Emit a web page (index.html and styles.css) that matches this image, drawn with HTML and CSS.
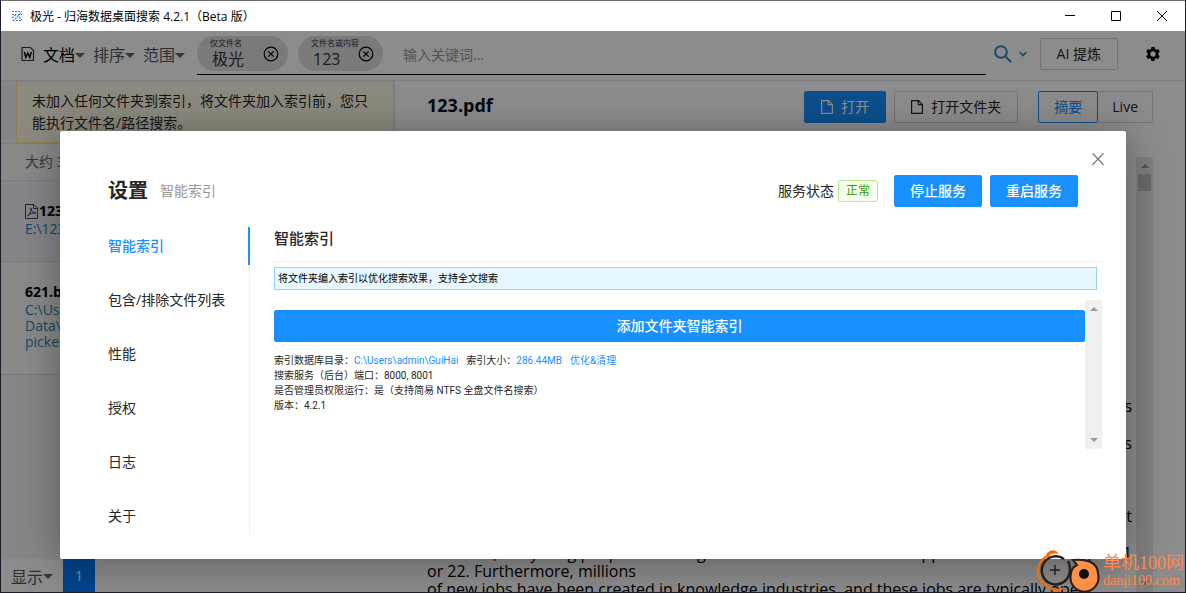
FILE: index.html
```html
<!DOCTYPE html>
<html lang="zh-CN">
<head>
<meta charset="utf-8">
<title>极光 - 归海数据桌面搜索</title>
<link rel="stylesheet" href="styles.css">
</head>
<body>
<div class="window">
  <header class="titlebar">
    <svg class="app-icon" width="12" height="12" viewBox="0 0 12 12" fill="none" stroke="#2f7be0" stroke-width="1.2" stroke-dasharray="2 1"><path d="M1 1.500h10M1 4.500h4M7 4.500h4M1 8l5-4M5 10.500h6M2 11l8-8M8 7l3 3"/></svg>
    <h1 class="window-title">极光 - 归海数据桌面搜索 4.2.1（Beta 版）</h1>
    <div class="window-controls">
      <button class="window-button" aria-label="最小化"><svg width="10" height="10" viewBox="0 0 10 10" stroke="#000"><path d="M0 4.500h10"/></svg></button>
      <button class="window-button" aria-label="最大化"><svg width="10" height="10" viewBox="0 0 10 10" fill="none" stroke="#000"><path d="M.5.5h9v9h-9z"/></svg></button>
      <button class="window-button" aria-label="关闭"><svg width="10" height="10" viewBox="0 0 10 10" stroke="#000"><path d="M0 0l10 10M10 0L0 10"/></svg></button>
    </div>
  </header>

  <div class="app">
    <div class="toolbar">
      <nav class="filters">
        <button class="filter filter-active">
          <svg width="14" height="16" viewBox="0 0 14 16" fill="none" stroke="#333" stroke-width="1.2"><path d="M1 1.500h8.500L12.500 4.500v10H1z"/><path d="M3.300 6l1.500 5.500L6.800 7l2 4.500L10.300 6" stroke="#000" stroke-width="1.400"/></svg>
          文档<span class="caret"></span></button>
        <button class="filter">排序<span class="caret"></span></button>
        <button class="filter">范围<span class="caret"></span></button>
      </nav>
      <div class="search">
        <div class="chip">
          <div class="chip-text"><small>仅文件名</small><span>极光</span></div>
          <button class="chip-remove" aria-label="移除"><svg width="16" height="16" viewBox="0 0 16 16" fill="none" stroke="#000" stroke-width="1.200"><circle cx="8" cy="8" r="6.800"/><path d="M5.300 5.300l5.400 5.400M10.700 5.300l-5.400 5.400"/></svg></button>
        </div>
        <div class="chip chip-narrow">
          <div class="chip-text"><small>文件名或内容</small><span>123</span></div>
          <button class="chip-remove" aria-label="移除"><svg width="16" height="16" viewBox="0 0 16 16" fill="none" stroke="#000" stroke-width="1.200"><circle cx="8" cy="8" r="6.800"/><path d="M5.300 5.300l5.400 5.400M10.700 5.300l-5.400 5.400"/></svg></button>
        </div>
        <input class="search-input" type="text" aria-label="关键词" placeholder="输入关键词...">
      </div>
      <button class="icon-button search-button" aria-label="搜索">
        <svg width="18" height="18" viewBox="0 0 18 18" fill="none" stroke="#1f8cc0" stroke-width="2"><circle cx="7" cy="7" r="5.800"/><path d="M11.200 11.200L17 17"/></svg>
        <svg width="8" height="6" viewBox="0 0 8 6" fill="none" stroke="#1f8cc0" stroke-width="1.800"><path d="M.7 1L4 4.500 7.300 1"/></svg>
      </button>
      <button class="button button-wide ai-button">AI 提炼</button>
      <button class="icon-button" aria-label="设置"><svg width="14" height="14" viewBox="0 0 14 14"><path fill="#000" fill-rule="evenodd" d="M5.500 0h3l.5 2 1.200.7 2-.6 1.500 2.600L12.300 6.200v1.600l1.400 1.500-1.500 2.600-2-.6-1.200.7-.5 2h-3l-.5-2-1.200-.7-2 .6L.3 9.300l1.400-1.500V6.200L.3 4.700l1.500-2.600 2 .6L5 2zM7 4.300a2.700 2.700 0 1 0 0 5.400 2.700 2.700 0 0 0 0-5.400z"/></svg></button>
    </div>

    <div class="workspace">
      <aside class="results">
        <p class="notice">未加入任何文件夹到索引，将文件夹加入索引前，您只能执行文件名/路径搜索。</p>
        <p class="summary">大约 3</p>
        <article class="result result-selected">
          <h2 class="result-title"><svg width="13" height="15" viewBox="0 0 13 15" fill="none" stroke="#444"><path d="M.5.5h8.500l3.500 3.500v10.500H.5zM8.500.5v4h4M2.500 12c2-1 4-5 3.500-8 0 3 2 5 5 5-3-.5-6 .5-8.500 3"/></svg>123</h2>
          <p class="result-path">E:\123</p>
        </article>
        <article class="result">
          <h2 class="result-title">621.b</h2>
          <p class="result-path">C:\Use<br>Data\<br>picker</p>
        </article>
        <div class="results-space"></div>
        <footer class="pager">
          <button class="filter">显示<span class="caret"></span></button>
          <button class="page-button">1</button>
        </footer>
      </aside>
      <main class="preview">
        <div class="preview-head">
          <h2 class="preview-title">123.pdf</h2>
          <button class="button button-primary button-wide"><svg width="12" height="14" viewBox="0 0 12 14" fill="none" stroke="currentColor" stroke-width="1.200"><path d="M.6.600h7l3.800 3.800v9H.6zM7.300.600v4h4"/></svg>打开</button>
          <button class="button button-wide"><svg width="12" height="14" viewBox="0 0 12 14" fill="none" stroke="currentColor" stroke-width="1.200"><path d="M.6.600h7l3.800 3.800v9H.6zM7.300.600v4h4"/></svg>打开文件夹</button>
          <div class="tabs">
            <button class="button tab tab-active">摘要</button>
            <button class="button tab">Live</button>
          </div>
        </div>
        <div class="document">
          <div class="page">
            <p class="line-end">jobs</p>
            <p class="line-end">years</p>
            <p class="line-end line-late">that</p>
            <p class="line-wide"><span>However, the young people are being</span><span>supported in the evening at 21</span></p>
            <p>or 22. Furthermore, millions</p>
            <p>of new jobs have been created in knowledge industries, and these jobs are typically open...</p>
          </div>
          <div class="scrollbar"><span class="arrow-up"></span><span class="thumb"></span><span class="scroll-space"></span><span class="arrow-down"></span></div>
        </div>
      </main>
    </div>

    <div class="mask">
      <section class="modal" role="dialog" aria-label="设置">
        <button class="modal-close" aria-label="关闭"><svg width="12" height="12" viewBox="0 0 12 12" stroke="#777" stroke-width="1.200"><path d="M.5 0l11 12M11.500 0L.5 12"/></svg></button>
        <header class="modal-head">
          <h2 class="modal-title">设置</h2>
          <span class="modal-subtitle">智能索引</span>
          <span class="status">服务状态</span>
          <span class="tag">正常</span>
          <button class="button button-primary">停止服务</button>
          <button class="button button-primary">重启服务</button>
        </header>
        <div class="modal-body">
          <nav class="menu">
            <a class="menu-item menu-item-active" href="#index">智能索引</a>
            <a class="menu-item" href="#files">包含/排除文件列表</a>
            <a class="menu-item" href="#performance">性能</a>
            <a class="menu-item" href="#license">授权</a>
            <a class="menu-item" href="#log">日志</a>
            <a class="menu-item" href="#about">关于</a>
          </nav>
          <div class="panel">
            <h3 class="panel-title">智能索引</h3>
            <p class="hint">将文件夹编入索引以优化搜索效果，支持全文搜索</p>
            <div class="panel-scroll">
              <div class="panel-content">
                <button class="button button-primary button-block">添加文件夹智能索引</button>
                <div class="info">
                  <p>索引数据库目录：<a href="#path">C:\Users\admin\GuiHai</a><span class="info-next">索引大小：<a href="#size">286.44MB</a></span><a class="info-next" href="#clean">优化&amp;清理</a></p>
                  <p>搜索服务（后台）端口：8000, 8001</p>
                  <p>是否管理员权限运行：是（支持简易 NTFS 全盘文件名搜索）</p>
                  <p>版本：4.2.1</p>
                </div>
              </div>
              <div class="scrollbar scrollbar-light"><span class="arrow-up"></span><span class="scroll-space"></span><span class="arrow-down"></span></div>
            </div>
          </div>
        </div>
      </section>
    </div>
  </div>

  <div class="watermark">
    <svg width="64" height="42" viewBox="0 0 64 42" fill="none">
      <path d="M13 5C6 7 1 13 1 21s6 17 16 18" stroke="#ff6a00" stroke-width="2"/>
      <path d="M9 5c3-6 10-6 13-1-5-1-9 0-13 2zM13 38c5 2 9 1 14-1-2 6-10 7-14 1z" fill="#ff6a00"/>
      <path d="M27 9A14 14 0 1 0 32 25" stroke="#2a1d1d" stroke-width="2.500"/>
      <path d="M31 11c2 4 3 8 1 14" stroke="#2a1d1d" stroke-width="2.500"/>
      <path d="M18 15v10M13 20h10" stroke="#2a1d1d" stroke-width="1.500"/>
      <path d="M36 10c12-1 25 1 25 14a14 14 0 1 1-27 0c0-4 2-7 6-9z" fill="#ff9147" stroke="#2a1d1d" stroke-width="2"/>
      <circle cx="47" cy="24" r="5" fill="#111"/>
    </svg>
    <div class="watermark-text"><strong>单机100网</strong><span>danji100.com</span></div>
  </div>
</div>
</body>
</html>
```

FILE: styles.css
```css
* { box-sizing: border-box; margin: 0; padding: 0; }
body, button, input {
  font-family: "Open Sans", "Noto Sans CJK SC", sans-serif;
  font-size: 14px;
  color: #262626;
}
button { background: none; border: 0; }
a { color: #1890ff; text-decoration: none; }
svg { flex: none; }

.window {
  position: relative;
  display: flex;
  flex-direction: column;
  height: 100vh;
  overflow: hidden;
  border: 1px solid #1c1b29;
  border-top-color: #6e6e6e;
}
.titlebar { display: flex; align-items: center; height: 30px; flex: none; padding-left: 10px; background: #fff; }
.window-title { flex: 1; margin-left: 7px; font-size: 12px; font-weight: 400; color: #000; }
.window-controls { display: flex; }
.window-button { display: flex; align-items: center; justify-content: center; width: 46px; height: 30px; }

.app { position: relative; display: flex; flex-direction: column; flex: 1; min-height: 0; overflow: hidden; background: #fff; }
.toolbar { display: flex; align-items: center; flex: none; height: 50px; padding: 0 25px 3px 0; border-bottom: 1px solid #e4e5e8; }
.filters { display: flex; gap: 8px; width: 196px; flex: none; padding-left: 20px; }
.filter { display: flex; align-items: center; white-space: nowrap; font-size: 16px; color: #555; }
.filter-active { color: #000; }
.filter-active svg { margin-right: 8px; }
.caret { flex: none; margin-top: 2px; border: 5px solid transparent; border-top-color: #666; border-bottom: 0; }
.search { display: flex; align-items: flex-start; align-self: flex-end; flex: 1; min-width: 0; height: 39px; margin-bottom: 2px; gap: 10px; border-bottom: 1px solid #000; }
.chip { position: relative; display: flex; align-items: center; width: 91px; height: 35px; padding: 0 0 2px 13px; flex: none; border-radius: 18px; background: #dedede; }
.chip-narrow { width: 85px; }
.chip-text { display: flex; flex-direction: column; white-space: nowrap; line-height: 20px; font-size: 16px; color: #333; }
.chip-text small { font-size: 8px; line-height: 12px; }
.chip-text span { padding-left: 2px; }
.chip-remove { position: absolute; top: 10px; right: 9px; width: 16px; height: 16px; }
.search-input { flex: 1; min-width: 0; height: 36px; padding-left: 10px; border: 0; outline: 0; background: none; }
.search-input::placeholder { color: #999; }
.icon-button { display: flex; align-items: center; }
.search-button { gap: 7px; padding: 0 13px 0 8px; }
.ai-button { margin-right: 28px; }

.button { display: flex; align-items: center; justify-content: center; gap: 8px; height: 32px; padding: 0 15px; border: 1px solid #d0d0d0; border-radius: 2px; white-space: nowrap; line-height: 18px; }
.button-primary { border-color: #1890ff; background: #1890ff; color: #fff; font-weight: 500; }
.button-wide { padding: 0 16px; font-weight: 400; }

.workspace { display: flex; flex: 1; min-height: 0; }
.results { display: flex; flex-direction: column; width: 394px; flex: none; border-right: 1px solid #dfe3ea; background: #f0f2f5; }
.notice { margin-left: 15px; padding: 8px 15px; border: 1px solid #ffe58f; border-radius: 2px; background: #fffbe6; line-height: 22px; }
.summary { padding: 8px 24px; border-top: 1px solid #dfe3ea; border-bottom: 1px solid #dfe3ea; background: #fafafa; line-height: 20px; color: #666; }
.result { padding: 20px 24px 24px; border-bottom: 1px solid #d9dce2; background: #fafafa; }
.result-selected { background: #eef2f7; }
.result-title { display: flex; align-items: center; gap: 1px; font-size: 14px; line-height: 20px; color: #000; }
.result-path { line-height: 16px; color: #1f86b5; }
.results-space { flex: 1; background: #f0f4f8; }
.pager { display: flex; height: 33px; flex: none; margin-right: -1px; background: #fff; }
.pager .filter { width: 62px; padding-left: 10px; }
.page-button { width: 32px; background: #007bff; color: #fff; }

.preview { display: flex; flex-direction: column; flex: 1; min-width: 0; }
.preview-head { display: flex; align-items: center; gap: 8px; height: 52px; flex: none; padding: 0 32px; }
.preview-title { flex: 1; padding-bottom: 4px; font-size: 18px; color: #000f1f; }
.tabs { display: flex; margin-left: 12px; }
.tab { padding: 0 14px; }
.tab-active { padding: 0 15px; border-color: #1890ff; color: #1890ff; }
.tab + .tab { border-left: 0; }
.document { display: flex; flex: 1; min-height: 0; padding: 24px 32px 0; }
.page { display: flex; flex-direction: column; justify-content: flex-end; flex: 1; min-width: 0; margin-bottom: -6px; padding-right: 4px; white-space: nowrap; font-size: 16px; line-height: 18px; color: #000; }
.line-end { padding-bottom: 19px; text-align: right; }
.line-late { padding-top: 36px; }
.line-wide { display: flex; justify-content: space-between; }
.scrollbar { display: flex; flex-direction: column; align-items: center; width: 17px; flex: none; padding: 7px 2px; background: #e8e8e8; }
.arrow-up, .arrow-down { border: 4px solid transparent; }
.arrow-up { border-top: 0; border-bottom-color: #999; }
.arrow-down { border-bottom: 0; border-top-color: #999; }
.thumb { width: 13px; height: 17px; margin-top: 6px; background: #bdbdbd; }
.scroll-space { flex: 1; }
.scrollbar-light { background: #f0f0f0; }

.mask { position: absolute; inset: 0; padding: 100px 59px 0; background: rgba(0, 0, 0, 0.45); }
.modal { position: relative; padding: 44px 24px 24px 48px; border-radius: 2px; background: #fff; box-shadow: 0 4px 40px rgba(0, 0, 0, 0.35); }
.modal-close { position: absolute; top: 20px; right: 20px; display: flex; padding: 2px; }
.modal-head { display: flex; align-items: center; gap: 8px; padding-right: 24px; }
.modal-title { font-size: 20px; line-height: 32px; }
.modal-subtitle { flex: 1; margin-left: 4px; line-height: 18px; color: #999; }
.status { margin-right: -4px; line-height: 18px; }
.tag { margin-right: 8px; padding: 0 7px; border: 1px solid #b7eb8f; border-radius: 2px; background: #f6ffed; color: #389e0d; font-size: 12px; line-height: 20px; }
.modal-body { display: flex; padding-top: 20px; }
.menu { display: flex; flex-direction: column; gap: 16px; width: 142px; flex: none; border-right: 1px solid #f0f0f0; }
.menu-item { margin-right: -1px; line-height: 38px; white-space: nowrap; color: #262626; }
.menu-item-active { border-right: 2px solid #1890ff; color: #1890ff; font-weight: 500; }
.panel { flex: 1; min-width: 0; padding-left: 24px; }
.panel-title { height: 35px; font-size: 15px; font-weight: 500; line-height: 22px; border-bottom: 1px solid #f0f0f0; }
.hint { margin: 5px 5px 10px 0; padding: 0 3px; border: 1px solid #91d5ff; background: #e6f7ff; font-size: 10px; line-height: 21px; color: #000; }
.panel-scroll { display: flex; height: 149px; }
.panel-content { flex: 1; min-width: 0; padding-top: 10px; }
.button-block { width: 100%; }
.info { padding-top: 11px; font-family: Roboto, "Noto Sans CJK SC", sans-serif; font-size: 10px; line-height: 15px; }
.info-next { margin-left: 8px; }

.watermark { position: absolute; right: 1px; bottom: 0; display: flex; align-items: center; gap: 2px; }
.watermark-text { display: flex; flex-direction: column; font-family: "Liberation Serif", "Noto Sans CJK SC", serif; color: #ff8a4c; }
.watermark-text strong { font-size: 18px; font-weight: 400; line-height: 20px; }
.watermark-text span { font-size: 14px; line-height: 16px; }
```
